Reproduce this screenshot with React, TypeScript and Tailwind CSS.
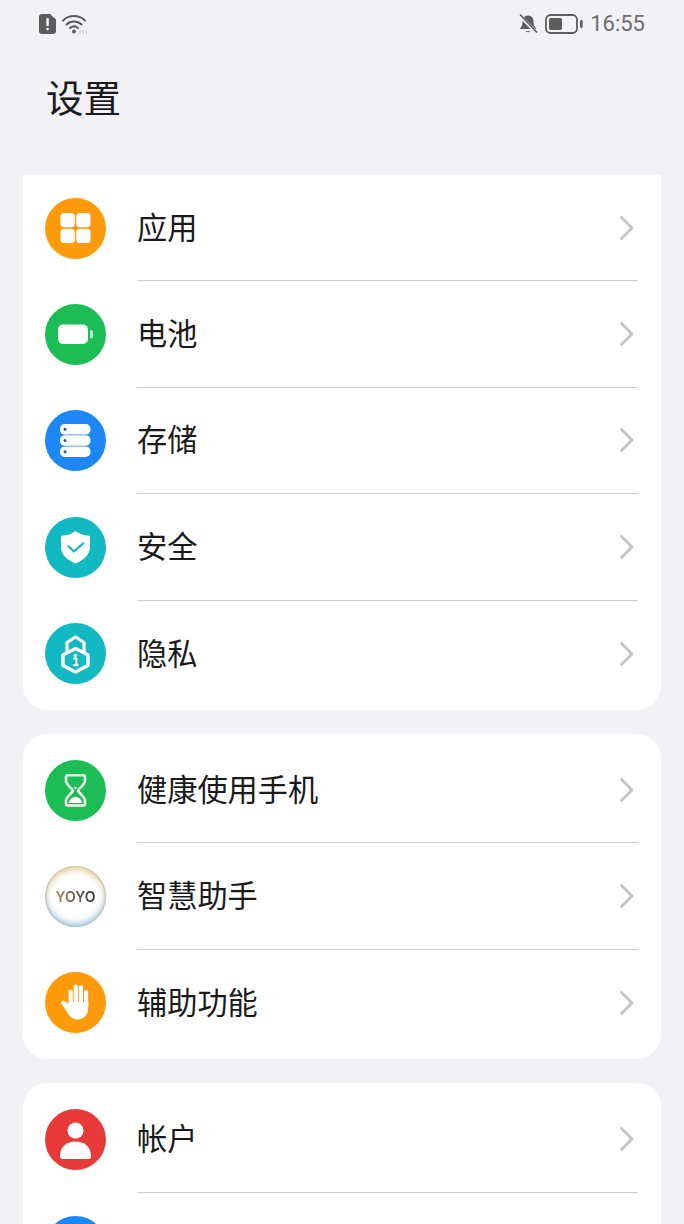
import React from 'react';

const cjk = { fontFamily: '"Noto Sans CJK SC", "Noto Sans", sans-serif' };

const Circle = ({ color, children }: { color: string; children: React.ReactNode }) => (
  <svg viewBox="0 0 61 61" className="h-[61px] w-[61px] shrink-0">
    <circle cx="30.5" cy="30.5" r="30.5" fill={color} />
    {children}
  </svg>
);

const AppsIcon = () => (
  <Circle color="#ff9a0b">
    <rect x="15.5" y="15" width="14.3" height="14.3" rx="3.5" fill="#fff" />
    <rect x="31.2" y="15" width="14.3" height="14.3" rx="3.5" fill="#fff" />
    <rect x="15.5" y="30.7" width="14.3" height="14.3" rx="3.5" fill="#fff" />
    <rect x="31.2" y="30.7" width="14.3" height="14.3" rx="3.5" fill="#fff" />
  </Circle>
);

const BatteryIcon = () => (
  <Circle color="#1dbd55">
    <rect x="13" y="20.5" width="30" height="19.5" rx="5" fill="#fff" />
    <rect x="45" y="26" width="3" height="8.5" rx="1.5" fill="#fff" opacity="0.7" />
  </Circle>
);

const StorageIcon = () => (
  <Circle color="#1d87f6">
    <rect x="15" y="14" width="30.5" height="10.6" rx="4.8" fill="#fff" />
    <rect x="15" y="25.2" width="30.5" height="10.6" rx="4.8" fill="#fff" />
    <rect x="15" y="36.4" width="30.5" height="10.6" rx="4.8" fill="#fff" />
    <circle cx="20" cy="19.3" r="1.5" fill="#1a5fae" />
    <circle cx="20" cy="30.5" r="1.5" fill="#1a5fae" />
    <circle cx="20" cy="41.7" r="1.5" fill="#1a5fae" />
  </Circle>
);

const ShieldIcon = () => (
  <Circle color="#12b8c2">
    <path d="M30.5 14 C34 16.8 38.5 18.4 44 18.8 C44.8 18.9 45 19.3 45 20 V30 C45 38 38 43.5 30.5 46.5 C23 43.5 16 38 16 30 V20 C16 19.3 16.2 18.9 17 18.8 C22.5 18.4 27 16.8 30.5 14 Z" fill="#fff" />
    <path d="M23.5 29.5 L29 34.5 L38 26.5" fill="none" stroke="#12b8c2" strokeWidth="2.3" strokeLinecap="round" strokeLinejoin="round" />
  </Circle>
);

const PrivacyIcon = () => (
  <Circle color="#12b8c2">
    <path d="M22 30 V19.5 L30.5 14 L39 19.5 V30" fill="none" stroke="#fff" strokeWidth="3.2" strokeLinejoin="round" />
    <path d="M30.5 25.5 L43 32 V42.5 L30.5 49 L18 42.5 V32 Z" fill="#12b8c2" stroke="#fff" strokeWidth="3.4" strokeLinejoin="round" />
    <circle cx="30.5" cy="32.3" r="1.8" fill="#fff" />
    <path d="M28.3 35.5 H31.4 V42 M28 42.3 H33.5" fill="none" stroke="#fff" strokeWidth="2" />
  </Circle>
);

const HourglassIcon = () => (
  <Circle color="#1dbd55">
    <path d="M23 15.3 H38 C39.5 15.3 40 16 40 17.3 V20.5 C40 25 34.5 27.5 33 30.7 C34.5 34 40 36.5 40 41 V43.5 C40 44.8 39.5 45.5 38 45.5 H23 C21.5 45.5 21 44.8 21 43.5 V41 C21 36.5 26.5 34 28 30.7 C26.5 27.5 21 25 21 20.5 V17.3 C21 16 21.5 15.3 23 15.3 Z" fill="none" stroke="#fff" strokeWidth="2.6" strokeLinejoin="round" opacity="0.9" />
    <path d="M28.5 27 H32.5 L30.5 29.5 Z" fill="#fff" />
    <path d="M24 43 C24.5 39 27 37.5 30.5 36.8 C34 37.5 36.5 39 37 43 Z" fill="#fff" />
  </Circle>
);

const HandIcon = () => (
  <Circle color="#ff9a0b">
    <path d="M25.7 19.5 V33 M30.8 14.5 V33 M35.9 15.2 V33 M41.1 20 V34" fill="none" stroke="#fff" strokeWidth="4.2" strokeLinecap="round" />
    <path d="M23.6 30 H43.2 V36 C43.2 43 38.5 47.5 32.5 47.5 C27.5 47.5 24.5 44.5 22.5 40.5 L16.6 32 C15.2 29.8 17.8 27.6 20 29.2 L23.6 32 Z" fill="#fff" />
  </Circle>
);

const UserIcon = () => (
  <Circle color="#e93a3a">
    <circle cx="30.5" cy="21.5" r="8" fill="#fff" />
    <path d="M15 47 C15 37.5 22 32.5 30.5 32.5 C39 32.5 46 37.5 46 47 C46 49 45 50 43.5 50 H17.5 C16 50 15 49 15 47 Z" fill="#fff" />
  </Circle>
);

const YoyoIcon = () => (
  <div className="flex h-[61px] w-[61px] shrink-0 items-center justify-center rounded-full bg-[radial-gradient(circle_at_50%_50%,#ffffff_45%,#f4f4f1_85%,#e8eef0_100%)] shadow-[inset_0_4px_5px_rgba(225,190,110,0.65),inset_0_-4px_5px_rgba(140,190,225,0.7),inset_0_0_0_1px_rgba(170,180,185,0.6)]">
    <span className="bg-gradient-to-r from-[#a38a4f] to-[#2f3438] bg-clip-text text-[14px] font-semibold tracking-[0px] text-transparent" style={{ fontFamily: 'Inter, sans-serif' }}>
      YOYO
    </span>
  </div>
);

const Chevron = () => (
  <svg viewBox="0 0 16 26" className="mr-[3px] h-[26px] w-4 shrink-0">
    <path d="M2.5 2.5 L13 13 L2.5 23.5" fill="none" stroke="#c4c4c4" strokeWidth="2.8" strokeLinecap="round" strokeLinejoin="round" />
  </svg>
);

const Row = ({ icon, label, last }: { icon: React.ReactNode; label: string; last?: boolean }) => (
  <div className="flex h-[106.4px] items-center pl-[22px]">
    <div className="mr-[31px]">{icon}</div>
    <div className={`mr-[23px] flex h-full flex-1 items-center justify-between ${last ? '' : 'border-b border-[#cfcfcf]'}`}>
      <span className="pb-[4px] text-[30.2px] leading-none text-[#1a1a1a]" style={cjk}>{label}</span>
      <Chevron />
    </div>
  </div>
);

export default function App() {
  return (
    <div className="h-[1224px] overflow-hidden bg-[#f1f1f6]">
      {/* status bar */}
      <div className="flex h-[46px] items-center justify-between pl-[39px] pr-[39px] pt-[1px] text-[#6e6e6e]">
        <div className="flex items-center gap-[6px]">
          <svg viewBox="0 0 17 20" className="h-5 w-[17px]">
            <path d="M3 0 H11 L17 5.5 V17 A3 3 0 0 1 14 20 H3 A3 3 0 0 1 0 17 V3 A3 3 0 0 1 3 0 Z" fill="#5c5c5c" />
            <rect x="7.4" y="4" width="2.4" height="8" rx="1" fill="#fff" />
            <rect x="7.4" y="13.7" width="2.4" height="2.5" rx="1" fill="#fff" />
          </svg>
          <svg viewBox="0 0 26 22" className="h-[22px] w-[26px]">
            <path d="M1 7.5 C7 1.5 17 1.5 23 7.5 M4.5 11.5 C8.5 7.5 15.5 7.5 19.5 11.5 M8 15 C10.5 13 13.5 13 16 15" fill="none" stroke="#5c5c5c" strokeWidth="2" strokeLinecap="round" />
            <circle cx="12" cy="18.5" r="2" fill="#5c5c5c" />
            <path d="M18 17.5 V21 M21 17.5 V21 M24 17.5 V21" stroke="#c9c9c9" strokeWidth="1.2" />
          </svg>
        </div>
        <div className="flex items-center">
          <svg viewBox="0 0 20 20" className="mr-[7px] h-5 w-5">
            <path d="M10 1.5 C6 1.5 4.5 4.5 4.5 8 C4.5 11.5 3.5 13 1.5 15 H18.5 C16.5 13 15.5 11.5 15.5 8 C15.5 4.5 14 1.5 10 1.5 Z" fill="#5c5c5c" />
            <path d="M8 17 A2.2 2.2 0 0 0 12 17 Z" fill="#5c5c5c" />
            <path d="M1.5 1 L18.5 19" stroke="#f1f1f6" strokeWidth="3.4" />
            <path d="M2.5 1 L18.5 18" stroke="#5c5c5c" strokeWidth="1.6" strokeLinecap="round" />
          </svg>
          <svg viewBox="0 0 38 20" className="mr-[7px] h-5 w-[38px]">
            <rect x="1" y="1" width="31" height="18" rx="4.5" fill="none" stroke="#5c5c5c" strokeWidth="1.8" />
            <rect x="4" y="4" width="13" height="12" rx="2" fill="#5c5c5c" />
            <rect x="35" y="6" width="2.6" height="8" rx="1.2" fill="#5c5c5c" />
          </svg>
          <span className="text-[22px] leading-none" style={{ fontFamily: 'Roboto, sans-serif' }}>16:55</span>
        </div>
      </div>

      {/* title */}
      <div className="flex h-[129px] items-start pl-[46px] pt-[27px]">
        <h1 className="text-[37.5px] leading-[46px] font-normal text-[#1a1a1a]" style={cjk}>设置</h1>
      </div>

      <div className="mx-[23px] flex flex-col gap-[24px]">
        <div className="rounded-b-[24px] rounded-t-[2px] bg-white pb-[3px]">
          <Row icon={<AppsIcon />} label="应用" />
          <Row icon={<BatteryIcon />} label="电池" />
          <Row icon={<StorageIcon />} label="存储" />
          <Row icon={<ShieldIcon />} label="安全" />
          <Row icon={<PrivacyIcon />} label="隐私" last />
        </div>
        <div className="rounded-[24px] bg-white py-[3px]">
          <Row icon={<HourglassIcon />} label="健康使用手机" />
          <Row icon={<YoyoIcon />} label="智慧助手" />
          <Row icon={<HandIcon />} label="辅助功能" last />
        </div>
        <div className="rounded-t-[24px] bg-white pt-[3.5px]">
          <Row icon={<UserIcon />} label="帐户" />
          <Row icon={<Circle color="#1d87f6"><circle cx="30.5" cy="30.5" r="10" fill="#fff" /></Circle>} label="" />
        </div>
      </div>
    </div>
  );
}
